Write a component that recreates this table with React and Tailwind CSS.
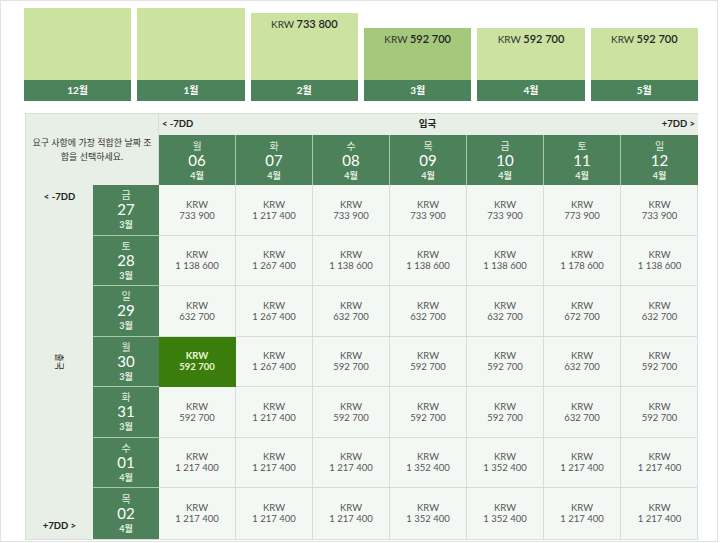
import React from "react";

const months = [
  { label: "12월", top: "mt-[7px]", price: null, bg: "bg-[#cbe2a1]" },
  { label: "1월", top: "mt-[7px]", price: null, bg: "bg-[#cbe2a1]" },
  { label: "2월", top: "mt-[12px]", price: "733 800", bg: "bg-[#cbe2a1]" },
  { label: "3월", top: "mt-[27px]", price: "592 700", bg: "bg-[#a5c97a]" },
  { label: "4월", top: "mt-[27px]", price: "592 700", bg: "bg-[#cbe2a1]" },
  { label: "5월", top: "mt-[27px]", price: "592 700", bg: "bg-[#cbe2a1]" },
];

const cols = [
  ["월", "06"], ["화", "07"], ["수", "08"], ["목", "09"],
  ["금", "10"], ["토", "11"], ["일", "12"],
];

const rows = [
  { wd: "금", d: "27", m: "3월", p: ["733 900", "1 217 400", "733 900", "733 900", "733 900", "773 900", "733 900"] },
  { wd: "토", d: "28", m: "3월", p: ["1 138 600", "1 267 400", "1 138 600", "1 138 600", "1 138 600", "1 178 600", "1 138 600"] },
  { wd: "일", d: "29", m: "3월", p: ["632 700", "1 267 400", "632 700", "632 700", "632 700", "672 700", "632 700"] },
  { wd: "월", d: "30", m: "3월", p: ["592 700", "1 267 400", "592 700", "592 700", "592 700", "632 700", "592 700"] },
  { wd: "화", d: "31", m: "3월", p: ["592 700", "1 217 400", "592 700", "592 700", "592 700", "632 700", "592 700"] },
  { wd: "수", d: "01", m: "4월", p: ["1 217 400", "1 217 400", "1 217 400", "1 352 400", "1 352 400", "1 217 400", "1 217 400"] },
  { wd: "목", d: "02", m: "4월", p: ["1 217 400", "1 217 400", "1 217 400", "1 352 400", "1 352 400", "1 217 400", "1 217 400"] },
];

function DayBox({ wd, d, m, className }) {
  return (
    <div className={"flex flex-col items-center justify-center bg-[#4c8159] text-white leading-none " + className}>
      <span className="text-[10px] text-[#e4efe4]">{wd}</span>
      <span className="text-[15px] mt-[2px]">{d}</span>
      <span className="text-[9px] font-bold mt-[3px] text-[#e4efe4]">{m}</span>
    </div>
  );
}

export default function App() {
  return (
    <div className="w-[718px] h-[542px] border border-[#e2e2e2] bg-white" style={{ fontFamily: "Lato, 'Noto Sans CJK KR', sans-serif" }}>
      {/* month bars */}
      <div className="ml-[23px] w-[674px] grid grid-cols-6 gap-[6px] h-[100px]">
        {months.map((mo) => (
          <div key={mo.label} className={"flex flex-col " + mo.top}>
            <div className={"flex-1 flex justify-center pt-[3px] " + mo.bg}>
              {mo.price && (
                <span className="text-[11px] text-[#222]">
                  <span className="text-[10px] text-[#333]">KRW </span>
                  <span className="font-semibold">{mo.price}</span>
                </span>
              )}
            </div>
            <div className="h-[21px] bg-[#4b835a] text-white text-[10px] font-bold flex items-center justify-center">
              {mo.label}
            </div>
          </div>
        ))}
      </div>

      {/* price grid */}
      <div className="ml-[24px] mt-[12px] w-[673px] grid grid-cols-[67px_66px_repeat(7,77px)] grid-rows-[21px_50px_repeat(7,50.5px)] border border-[#d8ddd8] bg-[#f4f8f4]">
        <div className="col-span-2 row-span-2 bg-[#e8efe6] border-r border-[#d8ddd8] flex flex-col items-center justify-center text-center text-[9px] leading-[14px] text-[#333] whitespace-nowrap">
          <span>요구 사항에 가장 적합한 날짜 조</span>
          <span>합을 선택하세요.</span>
        </div>
        <div className="col-span-7 bg-[#e8efe6] flex items-center justify-between px-[3px] text-[9.5px] font-bold text-[#222]">
          <span>&lt; -7DD</span>
          <span>입국</span>
          <span>+7DD &gt;</span>
        </div>
        {cols.map(([wd, d], i) => (
          <DayBox key={d} wd={wd} d={d} m="4월" className={i < 6 ? "border-r border-[#a9c8ae]" : ""} />
        ))}

        <div className="row-span-7 col-start-1 row-start-3 bg-[#e8efe6] flex flex-col items-center justify-between py-[5px] text-[9.5px] font-bold text-[#222]">
          <span>&lt; -7DD</span>
          <span className="rotate-90 text-[9px] font-normal">출국</span>
          <span>+7DD &gt;</span>
        </div>

        {rows.map((r, ri) => (
          <React.Fragment key={r.d}>
            <DayBox wd={r.wd} d={r.d} m={r.m} className={"col-start-2 " + (ri < 6 ? "border-b border-[#a9c8ae]" : "")} />
            {r.p.map((price, ci) => {
              const sel = ri === 3 && ci === 0;
              return (
                <div
                  key={ci}
                  className={
                    "flex flex-col items-center justify-center text-[9.5px] leading-[11px] " +
                    (ci < 6 ? "border-r " : "") +
                    (ri < 6 ? "border-b " : "") +
                    (sel ? "bg-[#3b7d0d] border-[#3b7d0d] text-[#eaf6d6] font-bold" : "border-[#d8ddd8] text-[#555]")
                  }
                >
                  <span>KRW</span>
                  <span>{price}</span>
                </div>
              );
            })}
          </React.Fragment>
        ))}
      </div>
    </div>
  );
}
